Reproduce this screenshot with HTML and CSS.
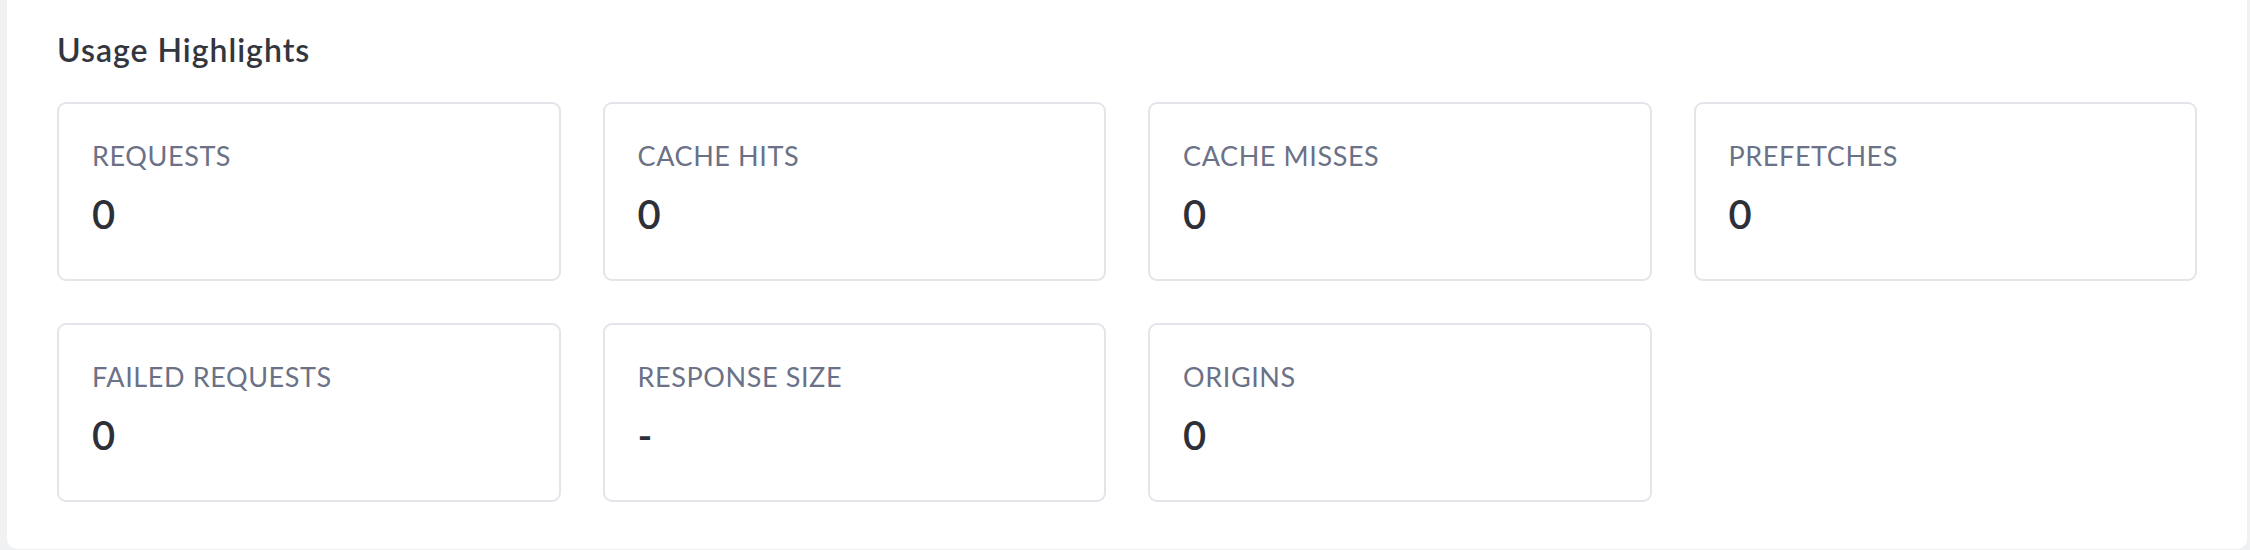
FILE: index.html
```html
<!DOCTYPE html>
<html lang="en">
<head>
<meta charset="utf-8">
<title>Usage Highlights</title>
<link rel="stylesheet" href="styles.css">
</head>
<body>
  <section class="panel">
    <h2 class="panel-title">Usage Highlights</h2>
    <div class="stats-grid">
      <div class="stat-card"><div class="stat-label">REQUESTS</div><div class="stat-value">0</div></div>
      <div class="stat-card"><div class="stat-label">CACHE HITS</div><div class="stat-value">0</div></div>
      <div class="stat-card"><div class="stat-label">CACHE MISSES</div><div class="stat-value">0</div></div>
      <div class="stat-card"><div class="stat-label">PREFETCHES</div><div class="stat-value">0</div></div>
      <div class="stat-card"><div class="stat-label">FAILED REQUESTS</div><div class="stat-value">0</div></div>
      <div class="stat-card"><div class="stat-label">RESPONSE SIZE</div><div class="stat-value">-</div></div>
      <div class="stat-card"><div class="stat-label">ORIGINS</div><div class="stat-value">0</div></div>
    </div>
  </section>
</body>
</html>
```

FILE: styles.css
```css
* { box-sizing: border-box; }

html, body {
  margin: 0;
  height: 550px;
  overflow: hidden;
}

body {
  background: #f0f1f3;
  padding: 0 3px 1px 7px;
  font-family: "Lato", "Inter", sans-serif;
}

.panel {
  background: #ffffff;
  border-radius: 0 0 10px 10px;
  height: 549px;
  padding: 31px 50px 0 50px;
}

.panel-title {
  margin: 0 0 33px 0;
  font-size: 32px;
  line-height: 38px;
  font-weight: 600;
  letter-spacing: 1px;
  color: #33353f;
}

.stats-grid {
  display: grid;
  grid-template-columns: repeat(4, 1fr);
  column-gap: 42px;
  row-gap: 42px;
}

.stat-card {
  border: 2px solid #e4e5ea;
  border-radius: 9px;
  padding: 36px 33px 41px 33px;
}

.stat-label {
  font-size: 27px;
  line-height: 32px;
  letter-spacing: 0.6px;
  color: #6b7187;
  font-weight: 400;
}

.stat-value {
  margin-top: 19px;
  font-size: 40px;
  line-height: 47px;
  color: #2e3039;
  font-weight: 600;
}
```
